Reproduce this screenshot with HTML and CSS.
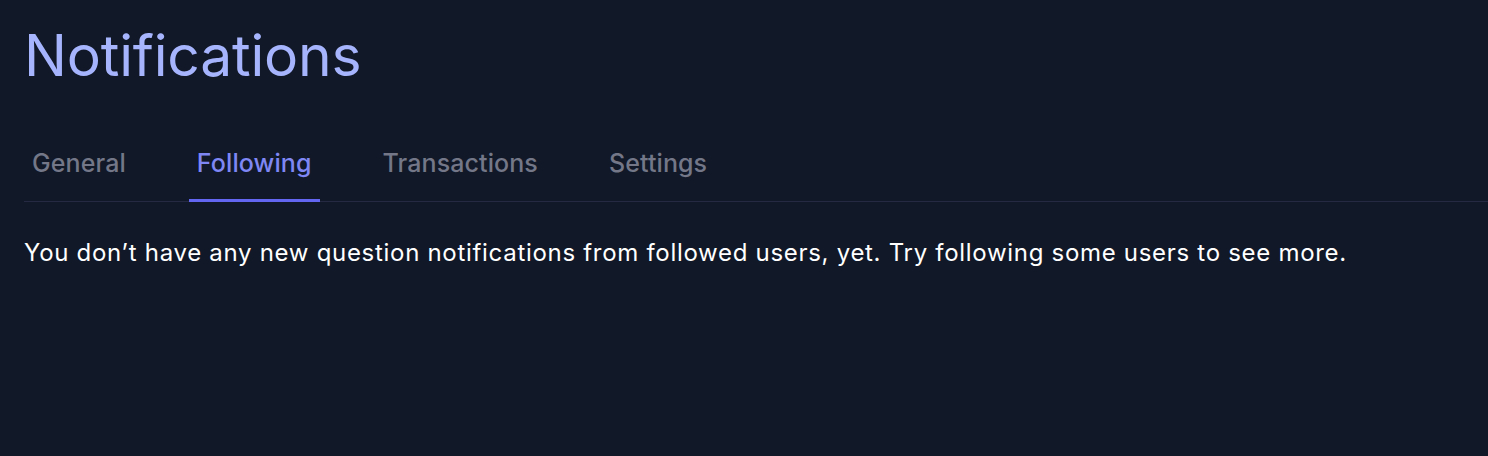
FILE: index.html
```html
<!DOCTYPE html>
<html lang="en">
<head>
<meta charset="utf-8">
<title>Notifications</title>
<link rel="stylesheet" href="styles.css">
</head>
<body>
<main class="page">
  <h1 class="title">Notifications</h1>
  <nav class="tabs">
    <a class="tab">General</a>
    <a class="tab tab-active">Following</a>
    <a class="tab">Transactions</a>
    <a class="tab">Settings</a>
  </nav>
  <p class="empty">You don’t have any new question notifications from followed users, yet. Try following some users to see more.</p>
</main>
</body>
</html>
```

FILE: styles.css
```css
html, body {
  margin: 0;
  padding: 0;
  background: #111827;
  height: 100%;
}
body {
  font-family: Inter, "Noto Sans", sans-serif;
  color: #ffffff;
}
.page {
  padding: 20px 0 0 24px;
}
.title {
  margin: 0;
  font-size: 57px;
  font-weight: 400;
  line-height: 72px;
  color: #a5b4fc;
  letter-spacing: -0.2px;
}
.tabs {
  display: flex;
  gap: 55px;
  margin-top: 56px;
  border-bottom: 1px solid #252a42;
}
.tab {
  padding: 0 8px 21px;
  font-size: 25px;
  line-height: 30px;
  font-weight: 500;
  letter-spacing: 0.1px;
  color: #737788;
  border-bottom: 3px solid transparent;
  margin-bottom: -1px;
}
.tab-active {
  color: #7f87f5;
  border-bottom-color: #6366f1;
}
.empty {
  margin: 36px 0 0;
  font-size: 24px;
  line-height: 30px;
  letter-spacing: 0.7px;
  color: #ffffff;
}
```
